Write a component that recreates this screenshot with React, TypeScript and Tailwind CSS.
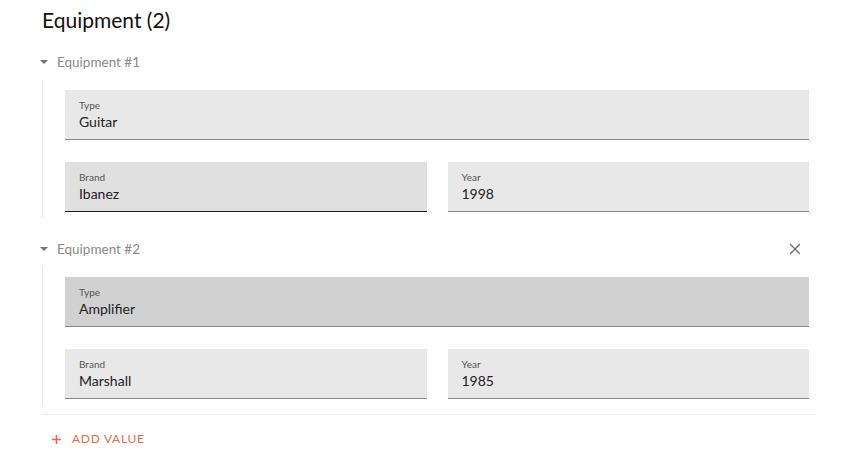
import { X } from 'lucide-react';

type Field = { label: string; value: string; tone?: 'idle' | 'hover' | 'focus' };

const font = { fontFamily: 'Lato, "Open Sans", sans-serif' };

function TextField({ label, value, tone = 'idle' }: Field) {
  const bg =
    tone === 'hover'
      ? 'bg-[#e0e0e0] border-[#1f1f1f]'
      : tone === 'focus'
        ? 'bg-[#d1d1d1] border-[#8a8a8a]'
        : 'bg-[#e8e8e8] border-[#8a8a8a]';
  return (
    <div className={`h-[50px] border-b px-[14px] pt-[9px] ${bg}`}>
      <div className="text-[10px] leading-[13px] text-[#555]">{label}</div>
      <div className="text-[14px] leading-[20px] text-[#222]">{value}</div>
    </div>
  );
}

function Item({
  n,
  type,
  brand,
  year,
  removable,
}: {
  n: number;
  type: Field;
  brand: Field;
  year: Field;
  removable?: boolean;
}) {
  return (
    <div>
      <div className="flex h-[36px] items-center justify-between pr-[12px]">
        <div className="flex items-center">
          <svg width="10" height="6" viewBox="0 0 10 6" className="ml-[-3px] mr-[8px]">
            <path d="M1 1h8L5 5z" fill="#757575" />
          </svg>
          <span className="text-[13.5px] text-[#8a8a8a]">Equipment #{n}</span>
        </div>
        {removable && <X size={18} strokeWidth={1.6} className="text-[#6b6b6b]" />}
      </div>
      <div className="border-l border-[#e6e6e6] pb-[6px] pl-[22px] pr-[7px] pt-[10px]">
        <TextField {...type} />
        <div className="mt-[22px] grid grid-cols-2 gap-[21px]">
          <TextField {...brand} />
          <TextField {...year} />
        </div>
      </div>
    </div>
  );
}

export default function App() {
  return (
    <div className="w-[861px] h-[468px] bg-white pl-[42px] pr-[45px]" style={font}>
      <h2 className="h-[44px] pt-[6px] text-[21px] leading-[28px] text-[#111]">Equipment (2)</h2>
      <Item
        n={1}
        type={{ label: 'Type', value: 'Guitar' }}
        brand={{ label: 'Brand', value: 'Ibanez', tone: 'hover' }}
        year={{ label: 'Year', value: '1998' }}
      />
      <div className="h-[13px]" />
      <Item
        n={2}
        removable
        type={{ label: 'Type', value: 'Amplifier', tone: 'focus' }}
        brand={{ label: 'Brand', value: 'Marshall' }}
        year={{ label: 'Year', value: '1985' }}
      />
      <div className="mt-[9px] border-t border-[#ececec]" />
      <button className="mt-[15px] ml-[10px] flex items-center gap-[11px] text-[12px] tracking-[0.06em] text-[#ea6a3e]">
        <svg width="9" height="9" viewBox="0 0 9 9">
          <path d="M4.5 0v9M0 4.5h9" stroke="#ea6a3e" strokeWidth="1.6" />
        </svg>
        ADD VALUE
      </button>
    </div>
  );
}
